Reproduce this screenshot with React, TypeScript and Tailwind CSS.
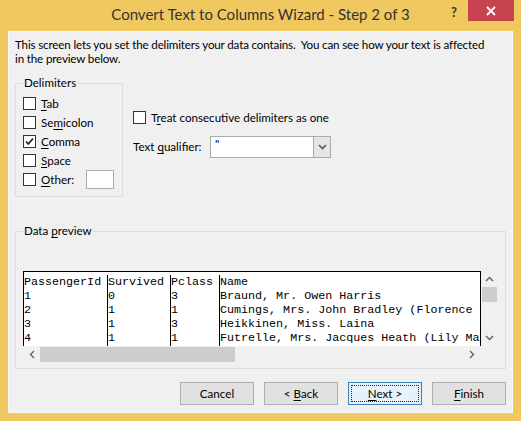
import React from "react";

const ui = "font-['Lato',sans-serif]";

function Key({ children }: { children: React.ReactNode }) {
  return <span className="underline underline-offset-2">{children}</span>;
}

function Check({ checked, children }: { checked?: boolean; children: React.ReactNode }) {
  return (
    <div className="flex h-[19px] items-center gap-[5px]">
      <div className="flex h-[13px] w-[13px] items-center justify-center border border-[#333] bg-white">
        {checked && (
          <svg width="11" height="11" viewBox="0 0 11 11">
            <path d="M2 5.5 L4.3 8 L9 2.5" fill="none" stroke="#222" strokeWidth="1.8" />
          </svg>
        )}
      </div>
      <span>{children}</span>
    </div>
  );
}

const rows = [
  ["PassengerId", "Survived", "Pclass", "Name"],
  ["1", "0", "3", "Braund, Mr. Owen Harris"],
  ["2", "1", "1", "Cumings, Mrs. John Bradley (Florence Briggs Thayer)"],
  ["3", "1", "3", "Heikkinen, Miss. Laina"],
  ["4", "1", "1", "Futrelle, Mrs. Jacques Heath (Lily May Peel)"],
];

const colW = ["w-[84px]", "w-[63px]", "w-[49px]", "w-[400px]"];

function Btn({ children, focus }: { children: React.ReactNode; focus?: boolean }) {
  return (
    <div
      className={`flex h-[23px] w-[74px] items-center justify-center border ${
        focus ? "border-[#3c7fb1] bg-[#e5f1fb]" : "border-[#adadad] bg-[#e1e1e1]"
      }`}
    >
      <div
        className={`h-[17px] w-[68px] text-center leading-[15px] ${
          focus ? "border border-dotted border-[#222]" : "pt-[1px]"
        }`}
      >
        {children}
      </div>
    </div>
  );
}

export default function App() {
  return (
    <div className={`h-[421px] w-[521px] bg-[#f0c860] text-[11.6px] text-black ${ui}`}>
      {/* title bar */}
      <div className="relative flex h-[31px] items-center justify-center">
        <span className="pb-[2px] text-[15px] text-[#333]">Convert Text to Columns Wizard - Step 2 of 3</span>
        <span className="absolute left-[451px] top-[3px] text-[13px] font-bold text-[#333]">?</span>
        <div className="absolute left-[468px] top-0 flex h-[21px] w-[46px] items-center justify-center bg-[#c7434f]">
          <svg width="10" height="10" viewBox="0 0 10 10">
            <path d="M1 1 L9 9 M9 1 L1 9" stroke="white" strokeWidth="1.8" />
          </svg>
        </div>
      </div>

      {/* client area */}
      <div className="mx-[8px] flex h-[382px] flex-col border border-[#f8f8f8] bg-[#f0f0f0] px-[6px] pt-[6px] leading-[14px]">
        <p className="whitespace-nowrap tracking-[-0.15px]">
          This screen lets you set the delimiters your data contains.&nbsp; You can see how your text is affected
          <br />
          in the preview below.
        </p>

        <div className="mt-[11px] flex">
          <fieldset className="w-[108px] border border-[#dcdcdc] px-[7px] pb-[7px] pt-[5px]">
            <legend className="px-[1px] leading-[12px]">Delimiters</legend>
            <Check>
              <Key>T</Key>ab
            </Check>
            <Check>
              Se<Key>m</Key>icolon
            </Check>
            <Check checked>
              <Key>C</Key>omma
            </Check>
            <Check>
              <Key>S</Key>pace
            </Check>
            <div className="flex items-center">
              <Check>
                <Key>O</Key>ther:
              </Check>
              <div className="ml-[12px] h-[19px] w-[28px] border border-[#ababab] bg-white" />
            </div>
          </fieldset>

          <div className="ml-[10px] flex flex-col pt-[31px]">
            <Check>
              T<Key>r</Key>eat consecutive delimiters as one
            </Check>
            <div className="mt-[9px] flex items-center">
              <span className="w-[77px]">
                Text <Key>q</Key>ualifier:
              </span>
              <div className="flex h-[22px] w-[121px] border border-[#ababab] bg-white">
                <span className="flex-1 pl-[4px] pt-[1px] leading-[12px]">"</span>
                <div className="flex w-[17px] items-center justify-center border-l border-[#ababab] bg-[#e6e6e6]">
                  <svg width="9" height="6" viewBox="0 0 9 6">
                    <path d="M1 1 L4.5 4.5 L8 1" fill="none" stroke="#555" strokeWidth="1.6" />
                  </svg>
                </div>
              </div>
            </div>
          </div>
        </div>

        <fieldset className="mt-[28px] border border-[#dcdcdc] px-[7px] pb-[6px]">
          <legend className="px-[1px] leading-[12px]">
            Data <Key>p</Key>review
          </legend>
          <div className="mt-[34px] grid grid-cols-[458px_17px] grid-rows-[75px_16px]">
            <div className="overflow-hidden border-l border-t border-r border-black bg-white pt-[3px] font-['Liberation_Mono',monospace] text-[11.7px] leading-[14px]">
              <div className="flex h-full">
                {[0, 1, 2, 3].map((c) => (
                  <div
                    key={c}
                    className={`shrink-0 whitespace-pre ${c < 3 ? "border-r border-black" : ""} ${colW[c]}`}
                  >
                    {rows.map((r, i) => (
                      <div key={i}>{r[c]}</div>
                    ))}
                  </div>
                ))}
              </div>
            </div>
            <div className="flex flex-col items-center bg-[#f0f0f0] pt-[5px]">
              <svg width="9" height="6" viewBox="0 0 9 6">
                <path d="M1 5 L4.5 1.5 L8 5" fill="none" stroke="#606060" strokeWidth="1.4" />
              </svg>
              <div className="mt-[5px] h-[15px] w-[15px] bg-[#cdcdcd]" />
              <div className="flex-1" />
              <svg className="mb-[5px]" width="9" height="6" viewBox="0 0 9 6">
                <path d="M1 1 L4.5 4.5 L8 1" fill="none" stroke="#606060" strokeWidth="1.4" />
              </svg>
            </div>
            <div className="flex items-center bg-[#f0f0f0] pl-[6px] pr-[6px]">
              <svg width="6" height="9" viewBox="0 0 6 9">
                <path d="M5 1 L1.5 4.5 L5 8" fill="none" stroke="#606060" strokeWidth="1.4" />
              </svg>
              <div className="ml-[5px] h-[15px] w-[195px] bg-[#cdcdcd]" />
              <div className="flex-1" />
              <svg width="6" height="9" viewBox="0 0 6 9">
                <path d="M1 1 L4.5 4.5 L1 8" fill="none" stroke="#606060" strokeWidth="1.4" />
              </svg>
            </div>
            <div className="bg-[#f0f0f0]" />
          </div>
        </fieldset>

        <div className="mt-[13px] flex justify-end gap-[10px]">
          <Btn>Cancel</Btn>
          <Btn>
            &lt; <Key>B</Key>ack
          </Btn>
          <Btn focus>
            <Key>N</Key>ext &gt;
          </Btn>
          <Btn>
            <Key>F</Key>inish
          </Btn>
        </div>
      </div>
    </div>
  );
}
